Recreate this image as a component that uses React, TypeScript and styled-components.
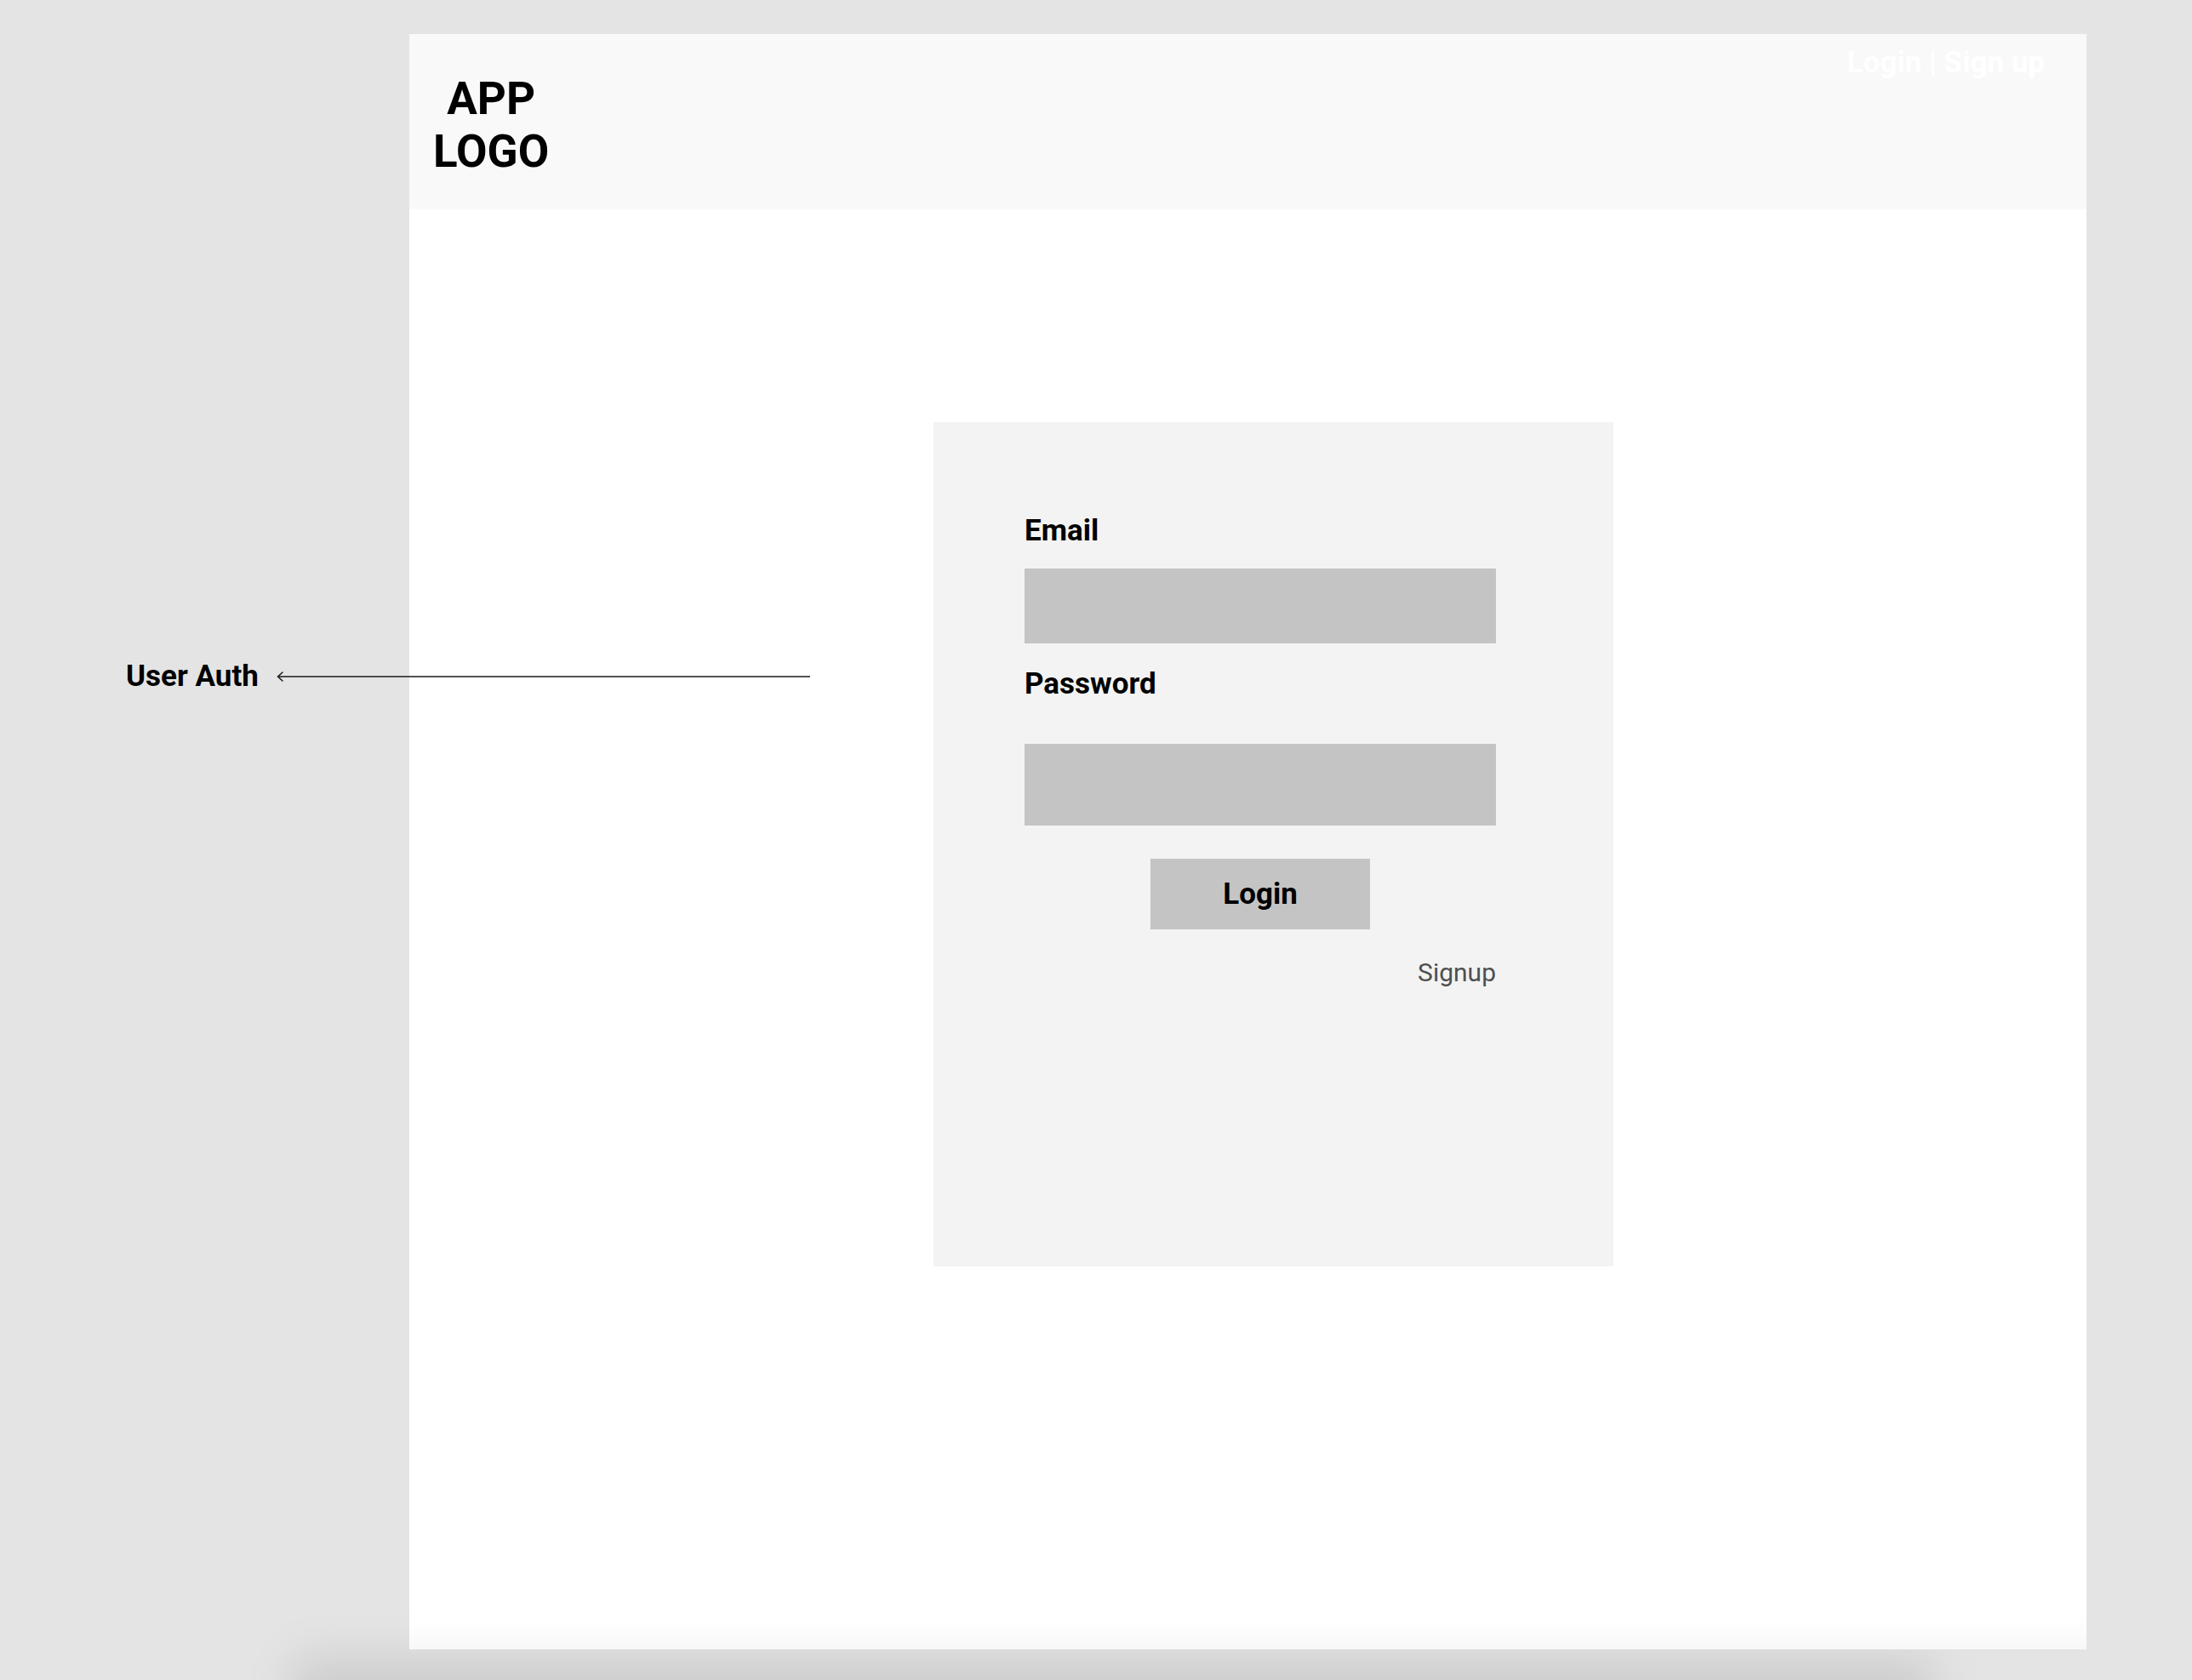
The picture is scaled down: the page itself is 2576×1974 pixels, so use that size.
import React from "react";
import styled, { createGlobalStyle } from "styled-components";

const GlobalStyle = createGlobalStyle`
  html, body {
    margin: 0;
    padding: 0;
    background: #e4e4e4;
    overflow: hidden;
  }
  * { box-sizing: border-box; }
  body {
    font-family: Roboto, "Liberation Sans", Arial, sans-serif;
  }
`;

const Page = styled.div`
  position: relative;
  width: 2576px;
  height: 1974px;
  padding: 40px 124px 0 481px;
  background: #e4e4e4;
  overflow: hidden;
`;

const Shadow = styled.div`
  position: absolute;
  left: 345px;
  width: 1925px;
  top: 1948px;
  height: 120px;
  background: rgba(0, 0, 0, 0.1);
  filter: blur(26px);
  z-index: 0;
`;

const Frame = styled.div`
  position: relative;
  z-index: 1;
  width: 1971px;
  height: 1898px;
  display: flex;
  flex-direction: column;
  background: linear-gradient(to bottom, #ffffff calc(100% - 34px), #f8f8f8 100%);
`;

const Header = styled.header`
  height: 206px;
  flex: none;
  display: flex;
  justify-content: space-between;
  align-items: flex-start;
  padding: 13px 49px 0 28px;
  background: #f9f9f9;
`;

const Logo = styled.div`
  align-self: center;
  margin-top: -6px;
  font-size: 53px;
  line-height: 62px;
  font-weight: 700;
  color: #000;
  text-align: center;
`;

const NavLinks = styled.div`
  font-size: 35px;
  font-weight: 700;
  color: #ffffff;
  white-space: pre;
`;

const Main = styled.main`
  flex: 1;
  padding: 250px 0 0 616px;
`;

const Card = styled.section`
  width: 799px;
  height: 992px;
  background: #f3f3f3;
  padding: 108px 138px 0 107px;
  display: flex;
  flex-direction: column;
`;

const Label = styled.label<{ $gap: number }>`
  font-size: 35px;
  line-height: 40px;
  font-weight: 700;
  color: #000;
  margin-bottom: ${(p) => p.$gap}px;
`;

const Input = styled.div<{ $h: number; $after: number }>`
  width: 554px;
  height: ${(p) => p.$h}px;
  background: #c4c4c4;
  margin-bottom: ${(p) => p.$after}px;
`;

const ButtonRow = styled.div`
  display: flex;
  justify-content: center;
`;

const LoginButton = styled.button`
  width: 258px;
  height: 83px;
  border: none;
  background: #c4c4c4;
  font-family: Roboto, "Liberation Sans", Arial, sans-serif;
  font-size: 35px;
  font-weight: 700;
  color: #000;
  padding: 0;
`;

const SignupRow = styled.div`
  display: flex;
  justify-content: flex-end;
  margin-top: 33px;
`;

const SignupLink = styled.span`
  font-size: 30px;
  line-height: 35px;
  color: #4f4f4f;
`;

const Annotation = styled.div`
  position: absolute;
  left: 148px;
  top: 775px;
  z-index: 2;
  display: flex;
  align-items: center;
  gap: 21px;
`;

const AnnotationText = styled.span`
  font-size: 35px;
  line-height: 40px;
  font-weight: 700;
  color: #000;
`;

const Arrow = () => (
  <svg width="628" height="18" viewBox="0 0 628 18" fill="none">
    <path d="M1.5 9 H627" stroke="#1a1a1a" strokeWidth="1.6" />
    <path d="M7 4 L1.5 9 L7 14" stroke="#1a1a1a" strokeWidth="1.6" strokeLinecap="round" strokeLinejoin="round" />
  </svg>
);

export default function App() {
  return (
    <>
      <GlobalStyle />
      <Page>
        <Shadow />
        <Frame>
          <Header>
            <Logo>
              APP
              <br />
              LOGO
            </Logo>
            <NavLinks>Login | Sign up</NavLinks>
          </Header>
          <Main>
            <Card>
              <Label $gap={24}>Email</Label>
              <Input $h={88} $after={28} />
              <Label $gap={50}>Password</Label>
              <Input $h={96} $after={39} />
              <ButtonRow>
                <LoginButton>Login</LoginButton>
              </ButtonRow>
              <SignupRow>
                <SignupLink>Signup</SignupLink>
              </SignupRow>
            </Card>
          </Main>
        </Frame>
        <Annotation>
          <AnnotationText>User Auth</AnnotationText>
          <Arrow />
        </Annotation>
      </Page>
    </>
  );
}
